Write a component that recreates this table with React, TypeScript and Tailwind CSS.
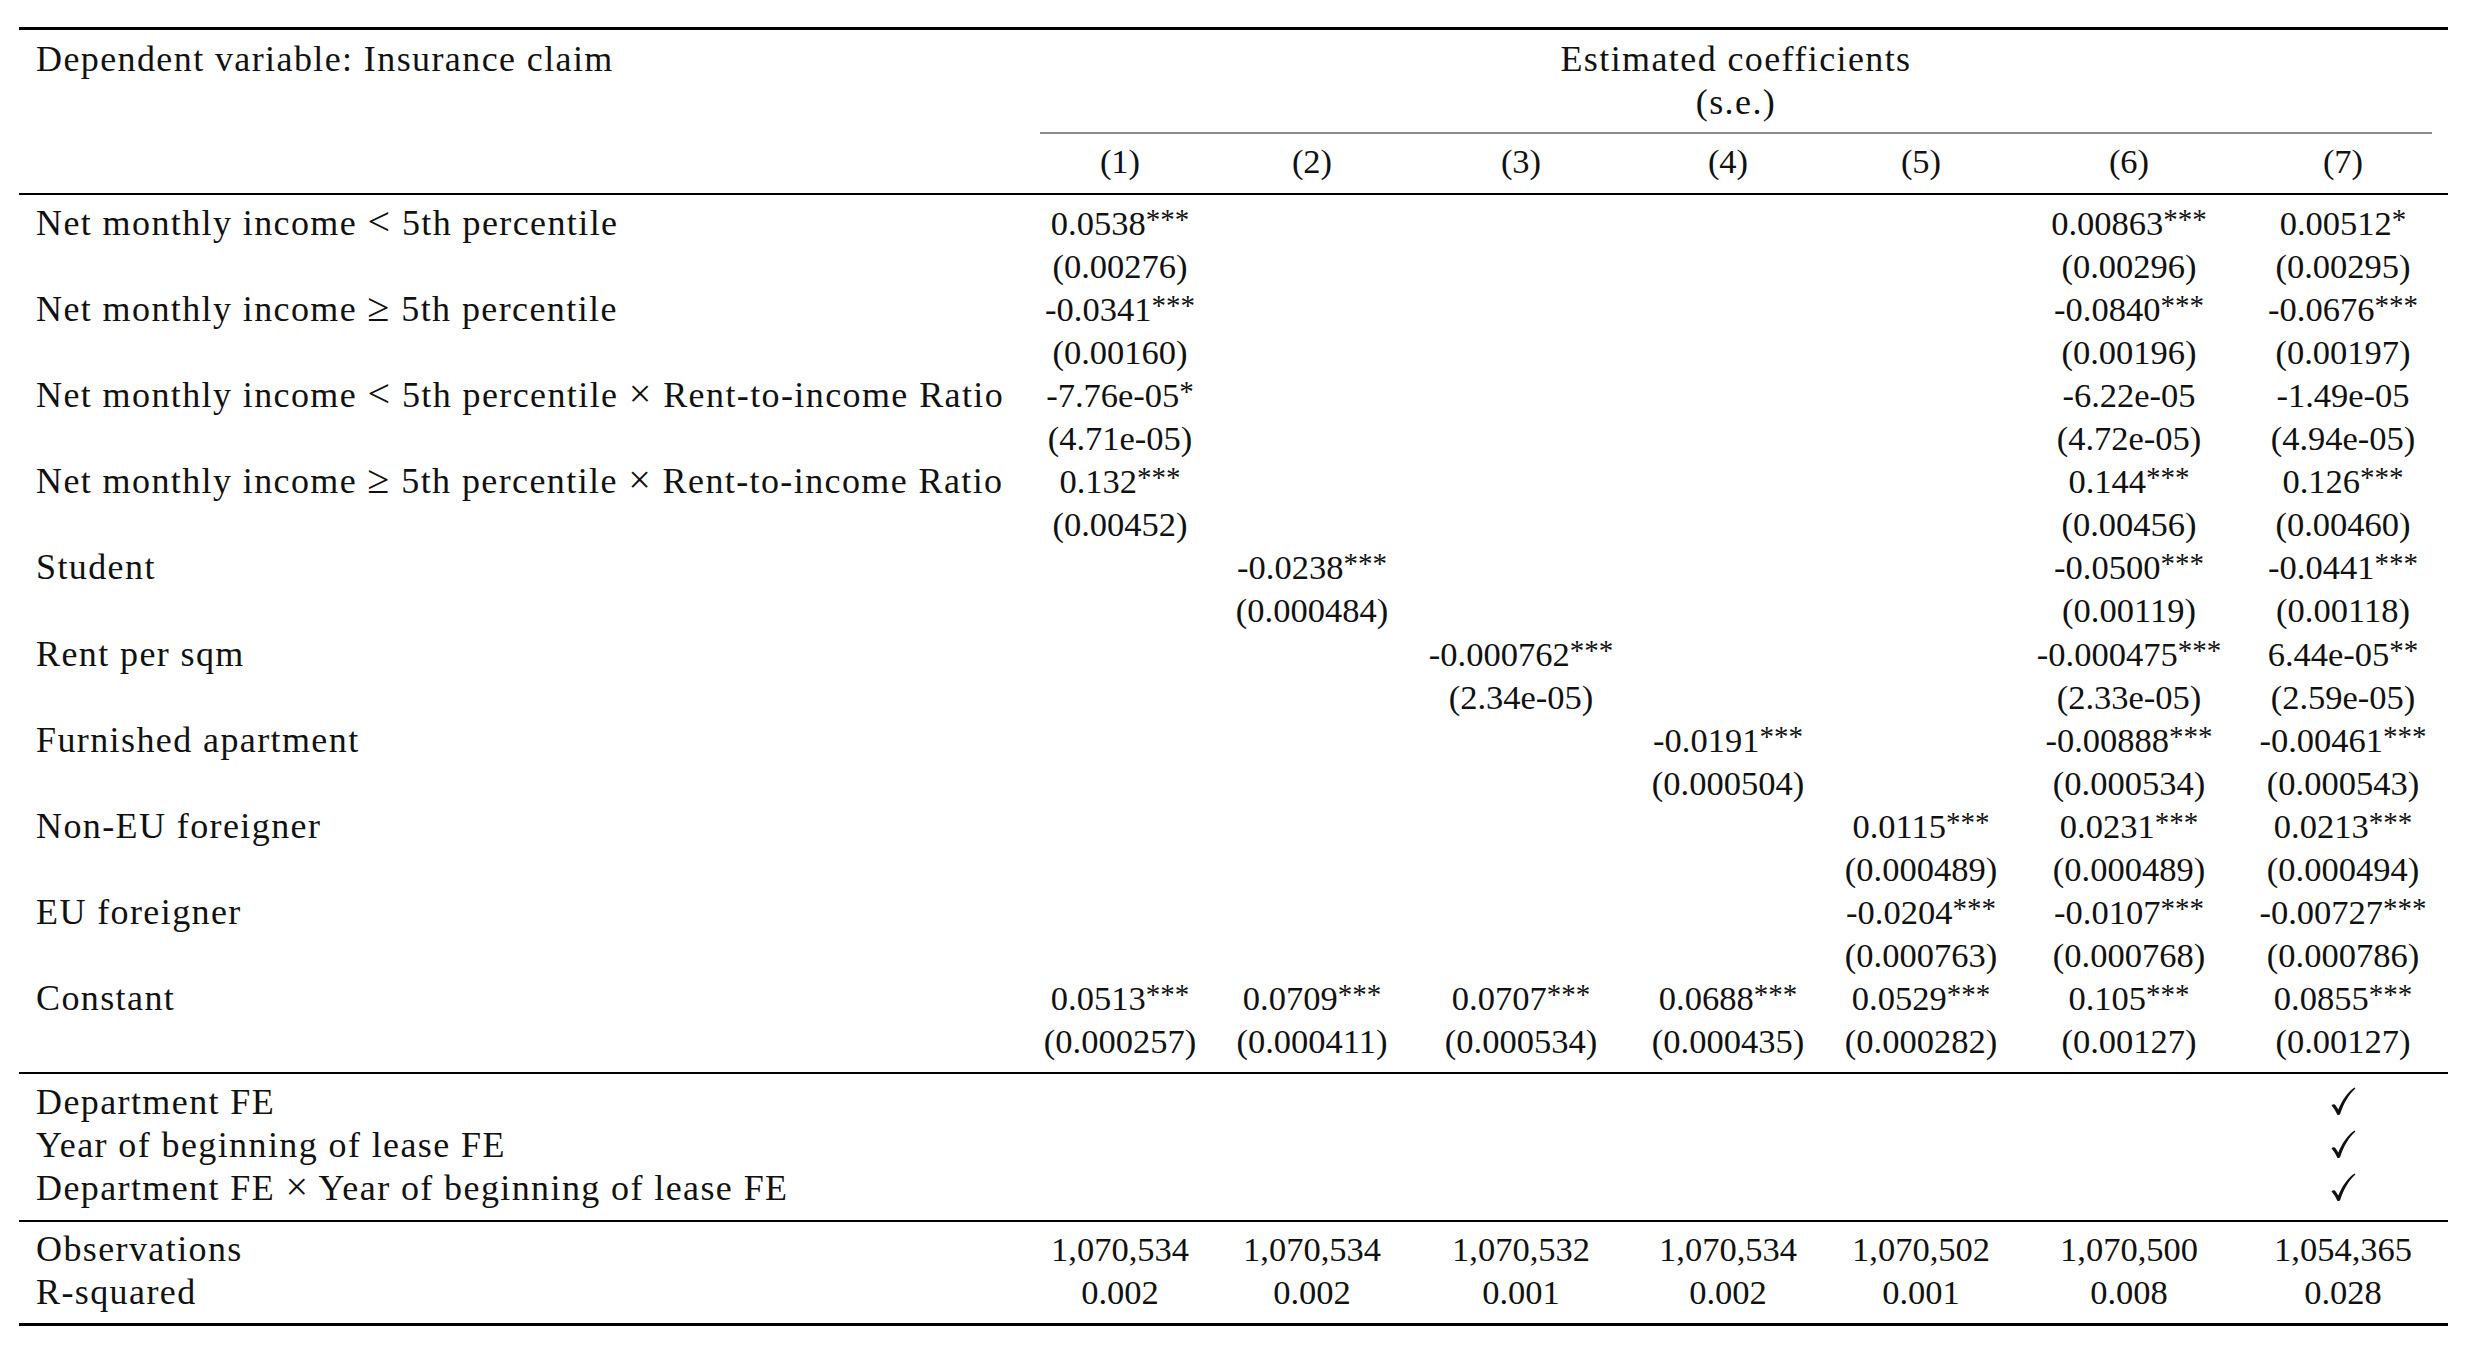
import React from 'react';

const grid = 'grid grid-cols-[1005px_192px_192px_226px_188px_198px_218px_210px]';

interface Row {
  label: string;
  b: string[];
  se: string[];
}

const rows: Row[] = [
  {
    label: 'Net monthly income < 5th percentile',
    b: ['0.0538***', '', '', '', '', '0.00863***', '0.00512*'],
    se: ['(0.00276)', '', '', '', '', '(0.00296)', '(0.00295)'],
  },
  {
    label: 'Net monthly income ≥ 5th percentile',
    b: ['-0.0341***', '', '', '', '', '-0.0840***', '-0.0676***'],
    se: ['(0.00160)', '', '', '', '', '(0.00196)', '(0.00197)'],
  },
  {
    label: 'Net monthly income < 5th percentile × Rent-to-income Ratio',
    b: ['-7.76e-05*', '', '', '', '', '-6.22e-05', '-1.49e-05'],
    se: ['(4.71e-05)', '', '', '', '', '(4.72e-05)', '(4.94e-05)'],
  },
  {
    label: 'Net monthly income ≥ 5th percentile × Rent-to-income Ratio',
    b: ['0.132***', '', '', '', '', '0.144***', '0.126***'],
    se: ['(0.00452)', '', '', '', '', '(0.00456)', '(0.00460)'],
  },
  {
    label: 'Student',
    b: ['', '-0.0238***', '', '', '', '-0.0500***', '-0.0441***'],
    se: ['', '(0.000484)', '', '', '', '(0.00119)', '(0.00118)'],
  },
  {
    label: 'Rent per sqm',
    b: ['', '', '-0.000762***', '', '', '-0.000475***', '6.44e-05**'],
    se: ['', '', '(2.34e-05)', '', '', '(2.33e-05)', '(2.59e-05)'],
  },
  {
    label: 'Furnished apartment',
    b: ['', '', '', '-0.0191***', '', '-0.00888***', '-0.00461***'],
    se: ['', '', '', '(0.000504)', '', '(0.000534)', '(0.000543)'],
  },
  {
    label: 'Non-EU foreigner',
    b: ['', '', '', '', '0.0115***', '0.0231***', '0.0213***'],
    se: ['', '', '', '', '(0.000489)', '(0.000489)', '(0.000494)'],
  },
  {
    label: 'EU foreigner',
    b: ['', '', '', '', '-0.0204***', '-0.0107***', '-0.00727***'],
    se: ['', '', '', '', '(0.000763)', '(0.000768)', '(0.000786)'],
  },
  {
    label: 'Constant',
    b: ['0.0513***', '0.0709***', '0.0707***', '0.0688***', '0.0529***', '0.105***', '0.0855***'],
    se: ['(0.000257)', '(0.000411)', '(0.000534)', '(0.000435)', '(0.000282)', '(0.00127)', '(0.00127)'],
  },
];

const feRows = ['Department FE', 'Year of beginning of lease FE', 'Department FE × Year of beginning of lease FE'];

const stats = [
  { label: 'Observations', vals: ['1,070,534', '1,070,534', '1,070,532', '1,070,534', '1,070,502', '1,070,500', '1,054,365'] },
  { label: 'R-squared', vals: ['0.002', '0.002', '0.001', '0.002', '0.001', '0.008', '0.028'] },
];

// number with significance stars set smaller and raised
function Value({ text }: { text: string }) {
  const m = text.match(/^(.*?)(\**)$/);
  const num = m ? m[1] : text;
  const stars = m ? m[2] : '';
  return (
    <div className="text-center text-[34.5px] leading-[43.08px] whitespace-nowrap">
      {num}
      {stars && <span className="text-[29px] leading-none align-[6px]">{stars}</span>}
    </div>
  );
}

// math symbols (<, ≥, ×) are a bit bigger in the original
function Label({ text }: { text: string }) {
  const parts = text.split(/([<≥×])/);
  return (
    <div className="pl-[17px] text-[36px] tracking-[1.4px] leading-[43.08px] whitespace-nowrap">
      {parts.map((p, i) =>
        /^[<≥×]$/.test(p) ? (
          <span key={i} className="text-[40px] leading-none">
            {p}
          </span>
        ) : (
          <React.Fragment key={i}>{p}</React.Fragment>
        )
      )}
    </div>
  );
}

function Check() {
  return (
    <svg width="25" height="29" viewBox="0 0 25 29" className="translate-y-[-1px]">
      <path
        d="M0.5 18.6C1.8 17.1 3.6 16.9 4.7 18.4L7.3 22.6C11.2 13 16.6 5.2 23.6 0.6L24.4 1.5C18.2 7 12.8 15.8 9 27.6L6.6 28.2C5 25.1 3 21.2 0.5 18.6Z"
        fill="#111"
      />
    </svg>
  );
}

function Line({ label, vals }: { label: string; vals: string[] }) {
  return (
    <div className={`${grid} h-[43.08px]`}>
      <Label text={label} />
      {vals.map((v, i) => (
        <Value key={i} text={v} />
      ))}
    </div>
  );
}

export default function App() {
  return (
    <div className="w-[2468px] h-[1350px] bg-white text-[#111] pl-[19px] pt-[27px] font-['Liberation_Serif',serif]">
      <div className="w-[2429px] flex flex-col">
        {/* top rule */}
        <div className="h-[3px] bg-black" />

        {/* header */}
        <div className={`${grid} mt-[8px]`}>
          <Label text="Dependent variable: Insurance claim" />
          <div className="col-span-7 flex flex-col items-center text-[36px] tracking-[1.4px] leading-[43.08px]">
            <div>Estimated coefficients</div>
            <div>(s.e.)</div>
          </div>
        </div>
        <div className={`${grid} mt-[8px]`}>
          <div />
          <div className="col-span-7 px-[16px]">
            <div className="h-[2px] bg-[#8c8c8c]" />
          </div>
        </div>
        <div className={`${grid} h-[43.08px] mt-[6px]`}>
          <div />
          {['(1)', '(2)', '(3)', '(4)', '(5)', '(6)', '(7)'].map((c) => (
            <Value key={c} text={c} />
          ))}
        </div>
        <div className="h-[2px] bg-black mt-[9.7px]" />

        {/* coefficients */}
        <div className="flex flex-col mt-[6.8px]">
          {rows.map((r) => (
            <React.Fragment key={r.label}>
              <Line label={r.label} vals={r.b} />
              <Line label="" vals={r.se} />
            </React.Fragment>
          ))}
        </div>
        <div className="h-[2.5px] bg-black mt-[8.6px]" />

        {/* fixed effects */}
        <div className="flex flex-col mt-[6.5px]">
          {feRows.map((f) => (
            <div key={f} className={`${grid} h-[43.08px]`}>
              <Label text={f} />
              <div className="col-start-8 flex items-center justify-center">
                <Check />
              </div>
            </div>
          ))}
        </div>
        <div className="h-[2.5px] bg-black mt-[9.4px]" />

        {/* stats */}
        <div className="flex flex-col mt-[6px]">
          {stats.map((s) => (
            <Line key={s.label} label={s.label} vals={s.vals} />
          ))}
        </div>
        <div className="h-[3px] bg-black mt-[8.5px]" />
      </div>
    </div>
  );
}
